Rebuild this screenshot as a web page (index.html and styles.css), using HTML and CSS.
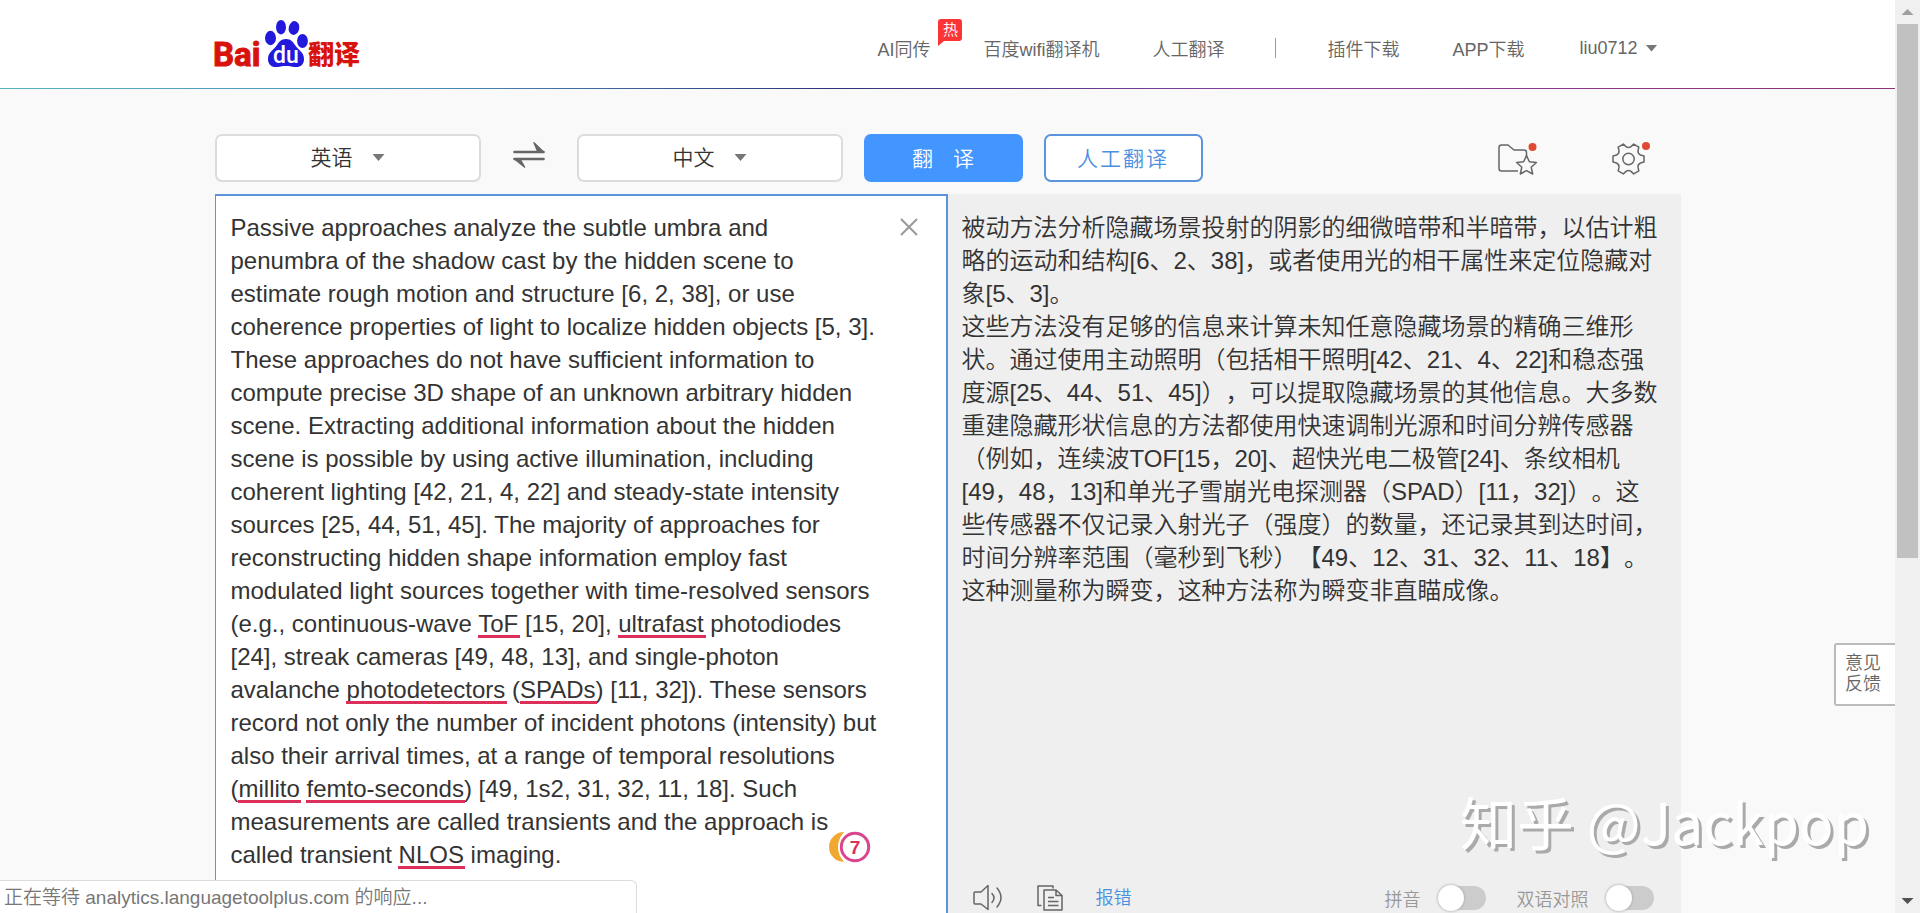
FILE: index.html
```html
<!DOCTYPE html>
<html lang="zh-CN">
<head>
<meta charset="utf-8">
<title>百度翻译</title>
<link rel="stylesheet" href="styles.css">
</head>
<body>
<div class="page">
  <header class="header">
    <div class="container header-inner">
      <a class="logo" href="#" aria-label="百度翻译">
        <svg width="156" height="64" viewBox="-4 0 156 64">
          <text class="logo-latin" x="-2" y="46">Bai</text>
          <g fill="#2319dc">
            <ellipse cx="55.500" cy="18" rx="5.500" ry="7.200"/>
            <ellipse cx="66" cy="7.200" rx="5" ry="7.200"/>
            <ellipse cx="79" cy="8" rx="5.300" ry="7" transform="rotate(12 79 8)"/>
            <ellipse cx="87.500" cy="21" rx="5.400" ry="7"/>
            <path d="M71 19c5 0 7 3 9 6 3 5 9 7 9 14 0 6-4 8.500-9 8-4-.5-6-1-9-1s-5 .5-9 1c-6 .5-9-3-9-8 0-7 6-9 9-14 2-3 4-6 9-6z"/>
          </g>
          <text class="logo-du" x="58" y="43">du</text>
          <text class="logo-cjk" x="93" y="44">翻译</text>
        </svg>
      </a>
      <nav class="nav">
        <a class="nav-link" href="#">AI同传<span class="hot">热</span></a>
        <a class="nav-link" href="#">百度wifi翻译机</a>
        <a class="nav-link" href="#">人工翻译</a>
        <span class="nav-divider"></span>
        <a class="nav-link" href="#">插件下载</a>
        <a class="nav-link" href="#">APP下载</a>
        <button class="user" type="button">liu0712<span class="caret"></span></button>
      </nav>
    </div>
  </header>

  <main class="container main">
    <div class="controls">
      <div class="lang">
        <select class="lang-select" aria-label="源语言"><option>英语</option></select>
        <span class="caret lang-caret"></span>
      </div>
      <button class="swap" type="button" aria-label="交换语言">
        <svg width="32" height="28" viewBox="0 0 32 28" fill="none" stroke="#666" stroke-width="2.600" stroke-linecap="round">
          <path d="M1.500 11h29M1.500 18h29"/>
          <path d="M21 1.800 30.500 11H25zM11.500 26 1.500 18H7z" fill="#666" stroke-width="1.500" stroke-linejoin="round"/>
        </svg>
      </button>
      <div class="lang">
        <select class="lang-select" aria-label="目标语言"><option>中文</option></select>
        <span class="caret lang-caret"></span>
      </div>
      <button class="btn btn-primary" type="button"><span>翻</span><span>译</span></button>
      <button class="btn btn-outline" type="button">人工翻译</button>
      <div class="tools">
        <button class="icon-btn" type="button" aria-label="收藏夹">
          <svg width="48" height="36" viewBox="0 0 48 36" fill="none" stroke="#666" stroke-width="1.500" stroke-linejoin="round">
            <path d="M21 29H4.500Q2 29 2 26.500V5.500Q2 3 4.500 3H11l6 5h10q2.500 0 2.500 2.500V14"/>
            <path d="M29.500 13.500l2.900 6.300 7 .7-5.200 4.700 1.500 6.800-6.200-3.400-6.200 3.400 1.500-6.800-5.200-4.700 7-.7z" fill="#f9f9f9"/>
            <circle cx="35.500" cy="5" r="4" fill="#e04a32" stroke="none"/>
          </svg>
        </button>
        <button class="icon-btn" type="button" aria-label="设置">
          <svg width="48" height="36" viewBox="0 0 48 36" fill="none" stroke="#666" stroke-width="1.500" stroke-linejoin="round">
            <g transform="translate(17.500 17)">
              <path d="M12-4 15.500-3V3L12 4Q9.200 5.300 9.500 8.400L10.350 11.900 5.150 14.900 2.500 12.400Q0 10.600-2.500 12.400L-5.150 14.900-10.350 11.900-9.500 8.400Q-9.200 5.300-12 4L-15.500 3V-3L-12-4Q-9.200-5.300-9.500-8.400L-10.350-11.900-5.150-14.900-2.500-12.400Q0-10.600 2.500-12.400L5.150-14.900 10.350-11.900 9.500-8.400Q9.200-5.300 12-4z"/>
              <circle r="5.700"/>
            </g>
            <circle cx="35" cy="4" r="4" fill="#e04a32" stroke="none"/>
          </svg>
        </button>
      </div>
    </div>

    <div class="panels">
      <section class="source">
        <textarea class="source-text" aria-label="原文" spellcheck="false">Passive approaches analyze the subtle umbra and penumbra of the shadow cast by the hidden scene to estimate rough motion and structure [6, 2, 38], or use coherence properties of light to localize hidden objects [5, 3].
These approaches do not have sufficient information to compute precise 3D shape of an unknown arbitrary hidden scene. Extracting additional information about the hidden scene is possible by using active illumination, including coherent lighting [42, 21, 4, 22] and steady-state intensity sources [25, 44, 51, 45]. The majority of approaches for reconstructing hidden shape information employ fast modulated light sources together with time-resolved sensors (e.g., continuous-wave ToF [15, 20], ultrafast photodiodes [24], streak cameras [49, 48, 13], and single-photon avalanche photodetectors (SPADs) [11, 32]). These sensors record not only the number of incident photons (intensity) but also their arrival times, at a range of temporal resolutions (millito femto-seconds) [49, 1s2, 31, 32, 11, 18]. Such measurements are called transients and the approach is called transient NLOS imaging.</textarea>
        <svg class="spell-marks" width="649" height="660" viewBox="0 0 649 660" fill="#dc2f59">
          <rect x="247" y="424" width="42" height="3"/>
          <rect x="387" y="424" width="88" height="3"/>
          <rect x="115" y="490" width="161" height="3"/>
          <rect x="289" y="490" width="77" height="3"/>
          <rect x="7" y="589" width="63" height="3"/>
          <rect x="75" y="589" width="159" height="3"/>
          <rect x="167" y="655" width="67" height="3"/>
        </svg>
        <button class="clear" type="button" aria-label="清空">
          <svg width="18" height="18" viewBox="0 0 18 18" stroke="#999" stroke-width="2"><path d="M1 1l16 16M17 1 1 17"/></svg>
        </button>
        <button class="checker" type="button">
          <svg width="42" height="32" viewBox="0 0 42 32">
            <path d="M15 1a15 15 0 0 0 0 30q-6-7-6-15T15 1z" fill="#f0a830"/>
            <circle cx="26" cy="16" r="13.700" fill="#fff" stroke="#d9468c" stroke-width="3"/>
            <text class="checker-count" x="26" y="23" text-anchor="middle">7</text>
          </svg>
        </button>
      </section>

      <section class="target">
        <div class="target-text">
          <p>被动方法分析隐藏场景投射的阴影的细微暗带和半暗带，以估计粗略的运动和结构[6、2、38]，或者使用光的相干属性来定位隐藏对象[5、3]。</p>
          <p>这些方法没有足够的信息来计算未知任意隐藏场景的精确三维形状。通过使用主动照明（包括相干照明[42、21、4、22]和稳态强度源[25、44、51、45]），可以提取隐藏场景的其他信息。大多数重建隐藏形状信息的方法都使用快速调制光源和时间分辨传感器（例如，连续波TOF[15，20]、超快光电二极管[24]、条纹相机[49，48，13]和单光子雪崩光电探测器（SPAD）[11，32]）。这些传感器不仅记录入射光子（强度）的数量，还记录其到达时间，时间分辨率范围（毫秒到飞秒）【49、12、31、32、11、18】。这种测量称为瞬变，这种方法称为瞬变非直瞄成像。</p>
        </div>
        <footer class="target-bar">
          <button class="bar-btn" type="button" aria-label="朗读">
            <svg width="32" height="28" viewBox="0 0 32 28" fill="none" stroke="#666" stroke-width="1.500" stroke-linejoin="round" stroke-linecap="round">
              <path d="M2 9q0-1 1-1h6l7-6.500v24L9 20H3q-1 0-1-1zM20 9.500q4 4.500 0 9M25 4q8 9.500 0 19"/>
            </svg>
          </button>
          <button class="bar-btn" type="button" aria-label="复制">
            <svg width="28" height="28" viewBox="0 0 28 28" fill="none" stroke="#666" stroke-width="1.500" stroke-linejoin="round">
              <path d="M5.500 21.500H2V2h15v2.500M8 6h12l6 5.500V26H8zM20 6v5.500h6M12 13.500h6M12 17.500h10.500M12 21.500h10.500"/>
            </svg>
          </button>
          <a class="report" href="#">报错</a>
          <label class="switch switch-first">拼音<input class="switch-input" type="checkbox"></label>
          <label class="switch">双语对照<input class="switch-input" type="checkbox"></label>
        </footer>
      </section>
    </div>
  </main>
</div>

<a class="feedback" href="#">意见反馈</a>
<div class="watermark">知乎 @Jackpop</div>
<div class="status">正在等待 analytics.languagetoolplus.com 的响应...</div>
<div class="scrollbar"><span class="arrow arrow-up"></span><span class="thumb"></span><span class="arrow arrow-down"></span></div>
</body>
</html>
```
FILE: styles.css
```css
* { box-sizing: border-box; }

body {
  margin: 0;
  background: #f9f9f9;
  color: #333;
  font-family: "Liberation Sans", "Noto Sans CJK SC", sans-serif;
  font-size: 18px;
  font-weight: 350;
  overflow: hidden;
}

button, select, textarea { font: inherit; color: inherit; }
button { border: 0; padding: 0; background: none; cursor: pointer; }
a { color: inherit; text-decoration: none; }
svg { display: block; }

.page {
  display: flex;
  flex-direction: column;
  height: 100vh;
  margin-right: 25px;
}

.container { width: 100%; max-width: 1466px; margin: 0 auto; }

/* header */
.header {
  height: 89px;
  background: #fff;
  border-bottom: 1px solid;
  border-image: linear-gradient(90deg, #55b4c0 0%, #4a90b8 22%, #2f3478 44%, #84409a 65%, #8c3278 100%) 1;
}
.header-inner { display: flex; justify-content: space-between; align-items: flex-start; }
.logo { margin: 20px 0 0 -4px; }
.logo-latin { font: 700 33px Roboto, sans-serif; fill: #d8130b; stroke: #d8130b; }
.logo-du { font: 500 23px Roboto, sans-serif; fill: #fff; }
.logo-cjk { font: 900 26px "Noto Sans CJK SC", sans-serif; fill: #d8130b; }

.nav {
  display: flex;
  align-items: center;
  gap: 53px;
  height: 96px;
  margin-right: 23px;
  color: #666;
}
.nav-link { position: relative; }
.nav-divider { width: 1px; height: 20px; margin: 0 -2px; background: #999; }
.user { display: flex; align-items: center; gap: 8px; margin-left: 2px; }

.hot {
  position: absolute;
  left: 61px;
  top: -16px;
  width: 24px;
  height: 22px;
  border-radius: 3px 3px 3px 0;
  background: #fb3436;
  color: #fff;
  font-size: 15px;
  line-height: 22px;
  text-align: center;
}
.hot::after {
  content: "";
  position: absolute;
  left: 0;
  top: 22px;
  border-top: 5px solid #fb3436;
  border-right: 6px solid transparent;
}

.caret {
  width: 12px;
  height: 7px;
  background: #777;
  clip-path: polygon(0 0, 100% 0, 50% 100%);
}

/* language row */
.main { display: flex; flex-direction: column; flex: 1; min-height: 0; }
.controls { display: flex; align-items: center; height: 48px; margin: 45px 0 12px; }
.lang { position: relative; width: 266px; height: 48px; }
.lang-select {
  appearance: none;
  width: 100%;
  height: 100%;
  padding: 0 32px 2px 0;
  border: 2px solid #dcdcdc;
  border-radius: 7px;
  background: #fff;
  font-size: 21px;
  text-align: center;
  text-align-last: center;
}
.lang-caret { position: absolute; left: 158px; top: 20px; pointer-events: none; }
.swap { margin: 0 32px 6px; }

.btn { width: 159px; height: 48px; padding-bottom: 2px; border-radius: 7px; font-size: 21px; }
.btn-primary {
  display: flex;
  justify-content: center;
  align-items: center;
  gap: 20px;
  margin: 0 21px;
  background: #4395ff;
  color: #fff;
}
.btn-outline { border: 2px solid #5b94db; background: #fff; color: #4a90e2; letter-spacing: 2px; }
.tools { display: flex; gap: 66px; margin: 4px 22px 0 auto; }

/* panels */
.panels { display: grid; grid-template-columns: 1fr 1fr; flex: 1; min-height: 0; }
.source {
  position: relative;
  min-height: 0;
  padding: 15px 67px 0 15px;
  border: solid #5b94db;
  border-width: 2px 2px 0 1px;
  background: #fff;
}
.source-text {
  display: block;
  width: 100%;
  height: 100%;
  padding: 0;
  border: 0;
  outline: 0;
  resize: none;
  overflow: hidden;
  background: none;
  font-size: 24px;
  line-height: 33px;
}
.spell-marks { position: absolute; left: 15px; top: 15px; pointer-events: none; }
.clear { position: absolute; right: 28px; top: 22px; }
.checker { position: absolute; right: 75px; top: 635px; }
.checker-count { font: 700 19px "Liberation Sans", sans-serif; fill: #dc2f59; }

.target { display: flex; flex-direction: column; min-height: 0; background: #efefef; }
.target-text {
  flex: 1;
  min-height: 0;
  padding: 17px 20px 0 14px;
  overflow: hidden;
  font-size: 24px;
  line-height: 33px;
  text-spacing-trim: space-all;
}
.target-text p { margin: 0; }
.target-bar {
  display: flex;
  align-items: center;
  height: 30px;
  padding: 0 27px 0 24px;
}
.bar-btn { margin-right: 32px; }
.report { padding-bottom: 4px; color: #4a90e2; }
.switch { display: flex; align-items: center; gap: 17px; margin-left: 31px; color: #999; }
.switch-first { margin-left: auto; }
.switch-input {
  appearance: none;
  position: relative;
  width: 48px;
  height: 24px;
  margin: 0;
  border-radius: 12px;
  background: #ccc;
}
.switch-input::before {
  content: "";
  position: absolute;
  left: 0;
  top: -1px;
  width: 26px;
  height: 26px;
  border-radius: 50%;
  background: #fff;
  box-shadow: 0 0 3px #999;
}

/* floating layers */
.feedback {
  position: fixed;
  right: 25px;
  top: 643px;
  width: 61px;
  padding: 8px 12px 9px 9px;
  border: 2px solid #bbb;
  border-right: 0;
  border-radius: 3px 0 0 3px;
  background: #fff;
  color: #666;
  line-height: 21px;
}
.watermark {
  position: fixed;
  right: 51px;
  bottom: 51px;
  color: #fff;
  font: 400 57px/84px "Noto Sans CJK SC", sans-serif;
  text-shadow: 3px 3px 0 #aaa;
  pointer-events: none;
}
.status {
  position: fixed;
  left: 0;
  bottom: 0;
  width: 637px;
  height: 33px;
  padding-left: 4px;
  border: solid #dcdcdc;
  border-width: 1px 1px 0 0;
  border-radius: 0 6px 0 0;
  background: #fff;
  color: #777;
  font-size: 19px;
  line-height: 33px;
}
.scrollbar {
  position: fixed;
  right: 0;
  top: 0;
  bottom: 0;
  display: flex;
  flex-direction: column;
  align-items: center;
  width: 25px;
  padding: 9px 0;
  background: #f0f0f0;
}
.thumb { width: 21px; height: 534px; margin-top: 9px; background: #c1c1c1; }
.arrow { width: 12px; height: 6px; background: #a0a0a0; clip-path: polygon(50% 0, 100% 100%, 0 100%); }
.arrow-down { margin-top: auto; background: #505050; clip-path: polygon(0 0, 100% 0, 50% 100%); }
```
